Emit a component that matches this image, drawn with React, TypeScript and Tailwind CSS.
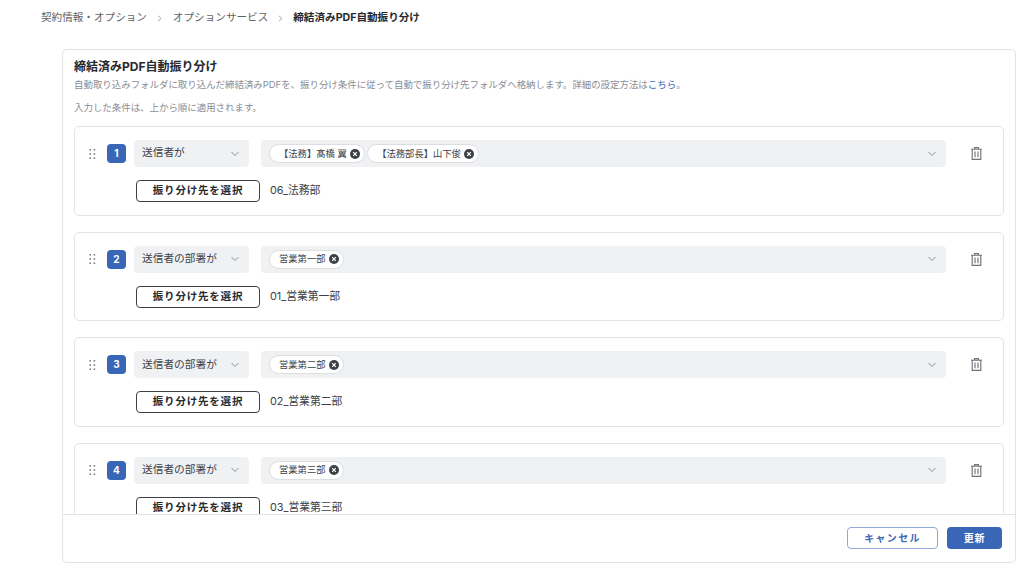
import React from "react";

function Chevron() {
  return (
    <svg width="10" height="6" viewBox="0 0 10 6" fill="none" className="shrink-0">
      <path d="M1.5 1L5 4.5L8.5 1" stroke="#8a8f96" strokeWidth="1" />
    </svg>
  );
}

function Grip() {
  return (
    <svg width="7" height="10" viewBox="0 0 7 10" className="shrink-0" fill="#7d8288">
      {[0.8, 5, 9.2].map((y) => (
        <React.Fragment key={y}>
          <circle cx="1.2" cy={y} r="0.9" />
          <circle cx="5.4" cy={y} r="0.9" />
        </React.Fragment>
      ))}
    </svg>
  );
}

function Trash() {
  return (
    <svg width="11" height="13" viewBox="0 0 11 13" fill="none" stroke="#6f747a" strokeWidth="1.15">
      <path d="M0 2.2H11" />
      <path d="M3.6 2V.6H7.4V2" />
      <path d="M1.2 2.2V12.4H9.8V2.2" />
      <path d="M4 4.5V10.2M7 4.5V10.2" />
    </svg>
  );
}

function CloseDot() {
  return (
    <svg width="10" height="10" viewBox="0 0 10 10" className="shrink-0">
      <circle cx="5" cy="5" r="5" fill="#3d4147" />
      <path d="M3.2 3.2L6.8 6.8M6.8 3.2L3.2 6.8" stroke="#fff" strokeWidth="1.2" />
    </svg>
  );
}

function Chip({ label }: { label: string }) {
  return (
    <span className="h-[19px] pl-[9px] pr-[4px] rounded-full bg-white border border-[#dcdee1] flex items-center gap-[3.5px] text-[9.3px] text-[#3d4147] whitespace-nowrap">
      {label}
      <CloseDot />
    </span>
  );
}

function Rule({ n, cond, chips, dest }: { n: number; cond: string; chips: string[]; dest: string }) {
  return (
    <div className="h-[89.6px] mb-4 shrink-0 rounded-[5px] border border-[#e2e3e5] pl-[14px] pr-[20px] pt-[13px]">
      <div className="flex items-center h-[27px]">
        <Grip />
        <div className="ml-[11px] w-[19px] h-[19px] rounded-[4px] bg-[#3a66b7] text-white text-[10px] font-bold flex items-center justify-center">
          {n}
        </div>
        <div className="ml-[8px] w-[115px] h-[27px] rounded-[4px] bg-[#f0f1f3] pl-[8px] pr-[9px] flex items-center justify-between text-[10.7px] text-[#3d4147]">
          <span>{cond}</span>
          <Chevron />
        </div>
        <div className="ml-[12px] w-[685px] h-[27px] rounded-[4px] bg-[#f0f1f3] pl-[8px] pr-[9px] flex items-center justify-between">
          <div className="flex items-center gap-[2px]">
            {chips.map((c) => (
              <Chip key={c} label={c} />
            ))}
          </div>
          <Chevron />
        </div>
        <div className="ml-[25px]">
          <Trash />
        </div>
      </div>
      <div className="flex items-center mt-[13px] ml-[47px]">
        <div className="w-[124px] h-[22px] rounded-[4px] border border-[#3d4147] bg-white flex items-center justify-center text-[10.5px] font-bold tracking-[0.8px] text-[#26292d]">
          振り分け先を選択
        </div>
        <span className="ml-[10px] text-[10.8px] text-[#3d4147]">{dest}</span>
      </div>
    </div>
  );
}

export default function App() {
  return (
    <div className="w-[1024px] h-[571px] bg-white overflow-hidden flex flex-col font-['Inter','Noto_Sans_CJK_JP',sans-serif]">
      <nav className="h-[49px] shrink-0 pl-[41px] pb-[13px] flex items-center text-[10.6px] text-[#5f6368]">
        <span>契約情報・オプション</span>
        <svg width="5" height="7" viewBox="0 0 5 7" fill="none" className="mx-[10.5px]">
          <path d="M1 .8L4 3.5L1 6.2" stroke="#a5a8ad" />
        </svg>
        <span>オプションサービス</span>
        <svg width="5" height="7" viewBox="0 0 5 7" fill="none" className="mx-[10px]">
          <path d="M1 .8L4 3.5L1 6.2" stroke="#a5a8ad" />
        </svg>
        <span className="font-bold text-[#26292d]">締結済みPDF自動振り分け</span>
      </nav>
      <section className="ml-[62px] w-[954px] h-[514px] rounded-[5px] border border-[#e2e3e5] flex flex-col overflow-hidden">
        <div className="flex-1 min-h-0 overflow-hidden px-[11px] pt-[9px]">
          <h1 className="text-[12px] leading-[16px] font-bold text-[#26292d]">締結済みPDF自動振り分け</h1>
          <p className="mt-[3px] text-[9.45px] leading-[14px] text-[#8a8e94]">
            自動取り込みフォルダに取り込んだ締結済みPDFを、振り分け条件に従って自動で振り分け先フォルダへ格納します。詳細の設定方法は
            <span className="text-[#3a66b7]">こちら</span>。
          </p>
          <p className="mt-[9px] text-[9.45px] leading-[14px] text-[#8a8e94]">入力した条件は、上から順に適用されます。</p>
          <div className="mt-[11px]">
            <Rule n={1} cond="送信者が" chips={["【法務】髙橋 翼", "【法務部長】山下俊"]} dest="06_法務部" />
            <Rule n={2} cond="送信者の部署が" chips={["営業第一部"]} dest="01_営業第一部" />
            <Rule n={3} cond="送信者の部署が" chips={["営業第二部"]} dest="02_営業第二部" />
            <Rule n={4} cond="送信者の部署が" chips={["営業第三部"]} dest="03_営業第三部" />
          </div>
        </div>
        <footer className="h-[48px] shrink-0 border-t border-[#e2e3e5] flex items-center justify-end pr-[13px] gap-[9px] pb-[1px]">
          <div className="w-[91px] h-[22px] rounded-[4px] border border-[#8fa9d8] bg-white flex items-center justify-center text-[10px] font-bold tracking-[1.3px] text-[#3a66b7]">
            キャンセル
          </div>
          <div className="w-[55px] h-[22px] rounded-[4px] bg-[#3a66b7] flex items-center justify-center text-[10px] font-bold tracking-[0.8px] text-white">
            更新
          </div>
        </footer>
      </section>
    </div>
  );
}
